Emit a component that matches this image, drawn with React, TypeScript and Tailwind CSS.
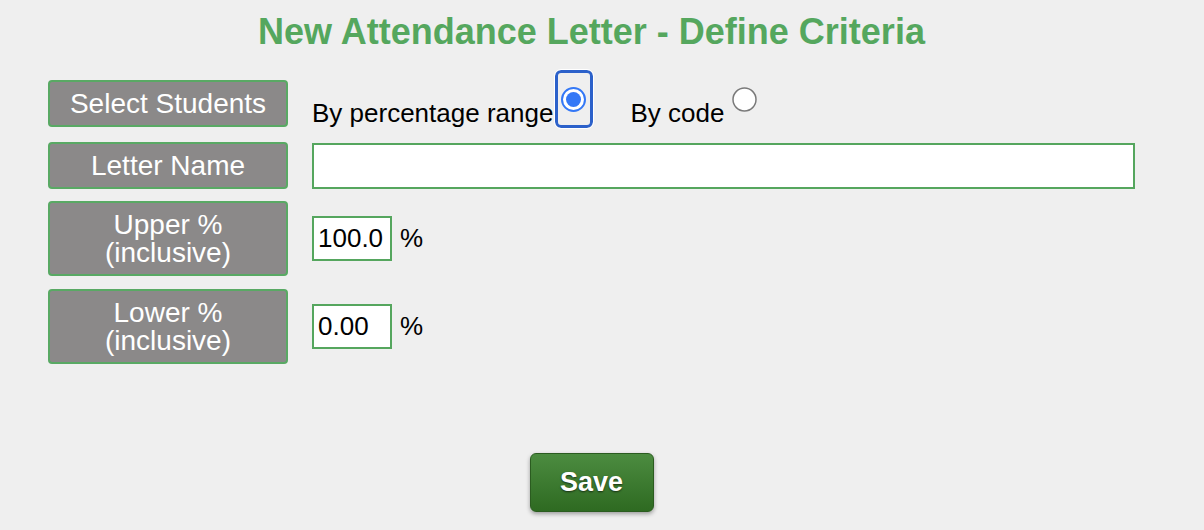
import { ReactNode } from 'react';

const Label = ({ children, tall }: { children: ReactNode; tall?: boolean }) => (
  <div
    className={
      tall
        ? 'flex w-[240px] shrink-0 flex-col items-center justify-center rounded-[4px] border-2 border-[#59a964] bg-[#8b8989] px-2 pt-[8px] pb-[7px] text-center text-[28px] leading-[28px] text-white'
        : 'flex w-[240px] shrink-0 flex-col items-center justify-center rounded-[4px] border-2 border-[#59a964] bg-[#8b8989] px-2 py-2 text-center text-[28px] leading-[27px] text-white'
    }
  >
    {children}
  </div>
);

const Radio = ({ checked }: { checked?: boolean }) => (
  <svg width="25" height="25" viewBox="0 0 25 25" className="block">
    {checked ? (
      <>
        <circle cx="12.5" cy="12.5" r="11.5" fill="#ffffff" stroke="#3478f6" strokeWidth="2" />
        <circle cx="12.5" cy="12.5" r="7.5" fill="#3478f6" />
      </>
    ) : (
      <circle cx="12.5" cy="12.5" r="11.5" fill="#ffffff" stroke="#7a7a7a" strokeWidth="1.5" />
    )}
  </svg>
);

const App = () => {
  return (
    <div className="min-h-[530px] w-full bg-[#efefef] font-['Liberation_Sans',Arial,sans-serif] text-black">
      <div className="w-[1183px]">
        {/* 제목 */}
        <h1 className="pt-[14px] text-center text-[36px] font-bold leading-9 text-[#55a75e]">
          New Attendance Letter - Define Criteria
        </h1>

        <div className="mt-[30px] flex flex-col pl-12">
          <div className="flex items-start gap-6">
            <Label>Select Students</Label>
            <div className="flex items-start">
              <span className="mt-[18px] text-[26px] leading-[30px]">By percentage range</span>
              <span className="relative ml-2 mt-[7px]">
                <span className="absolute -top-[17px] -bottom-[16px] -left-[6px] -right-[7px] rounded-[6px] border-[3px] border-[#2c61ca] outline outline-1 outline-white" />
                <Radio checked />
              </span>
              <span className="ml-[44px] mt-[18px] text-[26px] leading-[30px]">By code</span>
              <span className="ml-2 mt-[7px]">
                <Radio />
              </span>
            </div>
          </div>

          <div className="mt-[14px] flex items-center gap-6">
            <Label>Letter Name</Label>
            <input
              type="text"
              className="h-[46px] w-[823px] border-2 border-[#55a65e] bg-white px-1 text-[26px] outline-none"
            />
          </div>

          <div className="mt-[12px] flex items-center gap-6">
            <Label tall>
              <span>Upper %</span>
              <span>(inclusive)</span>
            </Label>
            <input
              type="text"
              defaultValue="100.0"
              className="h-[45px] w-[80px] border-2 border-[#55a65e] bg-white px-1 text-[26px] outline-none"
            />
            <span className="-ml-4 text-[26px]">%</span>
          </div>

          <div className="mt-[13px] flex items-center gap-6">
            <Label tall>
              <span>Lower %</span>
              <span>(inclusive)</span>
            </Label>
            <input
              type="text"
              defaultValue="0.00"
              className="h-[45px] w-[80px] border-2 border-[#55a65e] bg-white px-1 text-[26px] outline-none"
            />
            <span className="-ml-4 text-[26px]">%</span>
          </div>
        </div>

        <div className="mt-[89px] flex justify-center">
          <button className="h-[59px] w-[124px] rounded-[6px] border border-[#2b5c20] bg-gradient-to-b from-[#4c8c40] to-[#2e6a21] text-[27px] font-bold text-white shadow-[0_2px_4px_rgba(0,0,0,0.35)] [text-shadow:0_1px_2px_rgba(0,0,0,0.6)]">
            Save
          </button>
        </div>
      </div>
    </div>
  );
};

export default App;
